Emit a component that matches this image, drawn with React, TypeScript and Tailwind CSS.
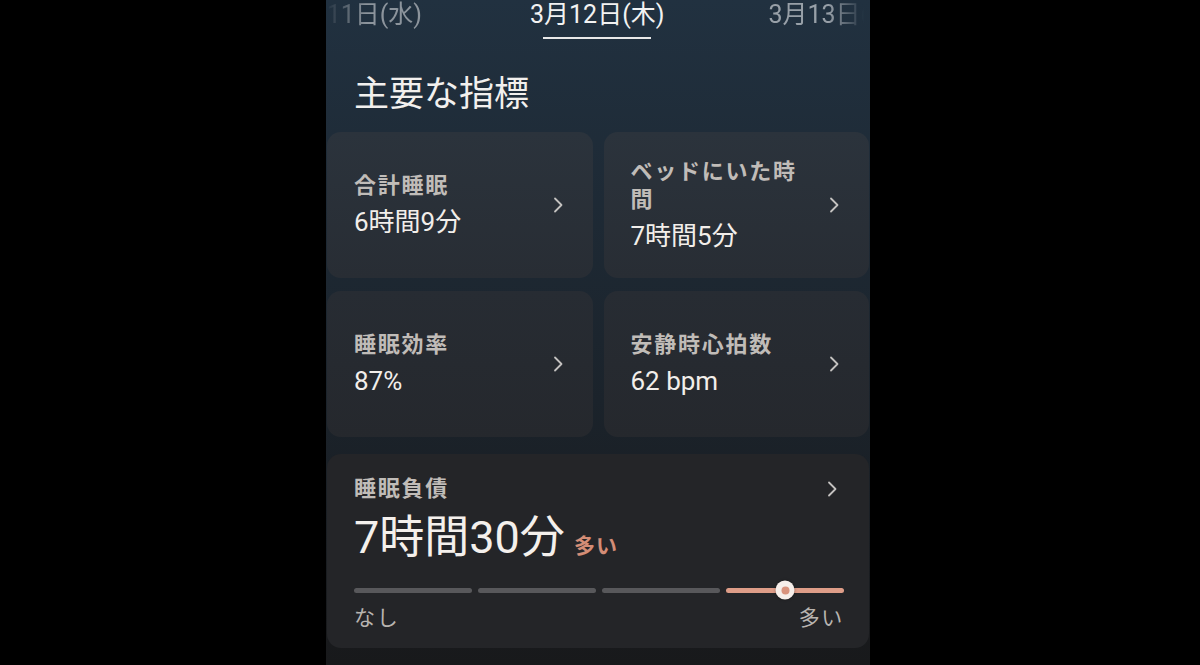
import React from "react"

const font = "font-['Roboto','Noto_Sans_CJK_JP',sans-serif]"

function Chevron({ className = "" }: { className?: string }) {
  return (
    <svg width="12" height="18" viewBox="0 0 12 18" className={className} fill="none">
      <path d="M3 2.5 L9.5 9 L3 15.5" stroke="#c4c2c0" strokeWidth="1.8" strokeLinecap="round" strokeLinejoin="round" />
    </svg>
  )
}

function MetricCard({ label, value, bg }: { label: string; value: string; bg: string }) {
  return (
    <div className={`flex h-[146px] items-center gap-4 rounded-[14px] pl-[27px] pr-[29px] ${bg}`}>
      <div className="flex-1 min-w-0">
        <div className="text-[22px] font-bold leading-[28px] tracking-[0.08em] text-[#c0bcb8]">{label}</div>
        <div className="mt-1.5 text-[26px] leading-[32px] text-[#f2eeea]">{value}</div>
      </div>
      <Chevron className="shrink-0" />
    </div>
  )
}

export default function App() {
  return (
    <div className={`flex h-[665px] w-full bg-black pl-[326px] overflow-hidden ${font}`}>
      <div className="relative h-full w-[544px] overflow-hidden bg-gradient-to-b from-[#213140] via-[#1b232b] via-60% to-[#18191b]">
        {/* date tabs */}
        <div className="flex h-[40px] items-start overflow-hidden whitespace-nowrap text-[25px] leading-[30px]">
          <div className="flex w-[96px] shrink-0 justify-end overflow-hidden [mask-image:linear-gradient(to_right,transparent_0px,black_40px)]">
            <span className="shrink-0 text-[#8c949c]">3月11日(水)</span>
          </div>
          <div className="ml-[108px] flex shrink-0 flex-col items-center">
            <span className="text-[#f2f2f2]">3月12日(木)</span>
            <div className="mt-[7px] h-[2px] w-[108px] bg-[#e8e8e8]" />
          </div>
          <div className="ml-[104px] shrink-0 [mask-image:linear-gradient(to_right,black_60px,transparent_96px)]">
            <span className="text-[#98a0a8]">3月13日(金)</span>
          </div>
        </div>

        <h1 className="mt-[35px] pl-[28px] text-[35px] leading-[40px] text-[#f2f0ee]">主要な指標</h1>

        <div className="mt-[17px] flex flex-col px-[1px]">
          <div className="grid grid-cols-2 gap-[11px]">
            <MetricCard label="合計睡眠" value="6時間9分" bg="bg-gradient-to-b from-[#2b333c] to-[#282d34]" />
            <MetricCard label="ベッドにいた時間" value="7時間5分" bg="bg-gradient-to-b from-[#2b333c] to-[#282d34]" />
          </div>
          <div className="mt-[13px] grid grid-cols-2 gap-[11px]">
            <MetricCard label="睡眠効率" value="87%" bg="bg-gradient-to-b from-[#272c33] to-[#25282d]" />
            <MetricCard label="安静時心拍数" value="62 bpm" bg="bg-gradient-to-b from-[#272c33] to-[#25282d]" />
          </div>

          {/* sleep debt */}
          <div className="mt-[17px] rounded-[14px] bg-[#242528] pb-[17px] pl-[27px] pr-[25px] pt-[21px]">
            <div className="flex items-center justify-between">
              <div className="text-[22px] font-bold leading-[28px] tracking-[0.08em] text-[#c0bcb8]">睡眠負債</div>
              <Chevron className="mr-[6px]" />
            </div>
            <div className="mt-[11px] flex items-baseline gap-[9px] leading-[48px]">
              <span className="text-[45px] text-[#f4f0ec]">7時間30分</span>
              <span className="text-[21px] font-bold tracking-[0.05em] text-[#d48d76]">多い</span>
            </div>
            <div className="mt-[11px] grid h-[18px] grid-cols-4 items-center gap-[6px]">
              <div className="h-[5px] rounded-full bg-[#58585b]" />
              <div className="h-[5px] rounded-full bg-[#58585b]" />
              <div className="h-[5px] rounded-full bg-[#58585b]" />
              <div className="relative h-[5px] rounded-full bg-[#de9d88]">
                <div className="absolute left-1/2 top-1/2 flex h-[19px] w-[19px] -translate-x-1/2 -translate-y-1/2 items-center justify-center rounded-full bg-[#f6eeea] shadow-[0_0_3px_rgba(0,0,0,0.4)]">
                  <div className="h-[8px] w-[8px] rounded-full bg-[#d9937d]" />
                </div>
              </div>
            </div>
            <div className="mt-[6px] flex justify-between text-[21px] leading-[26px] tracking-[0.08em] text-[#b8b4b0]">
              <span>なし</span>
              <span>多い</span>
            </div>
          </div>
        </div>
      </div>
    </div>
  )
}
